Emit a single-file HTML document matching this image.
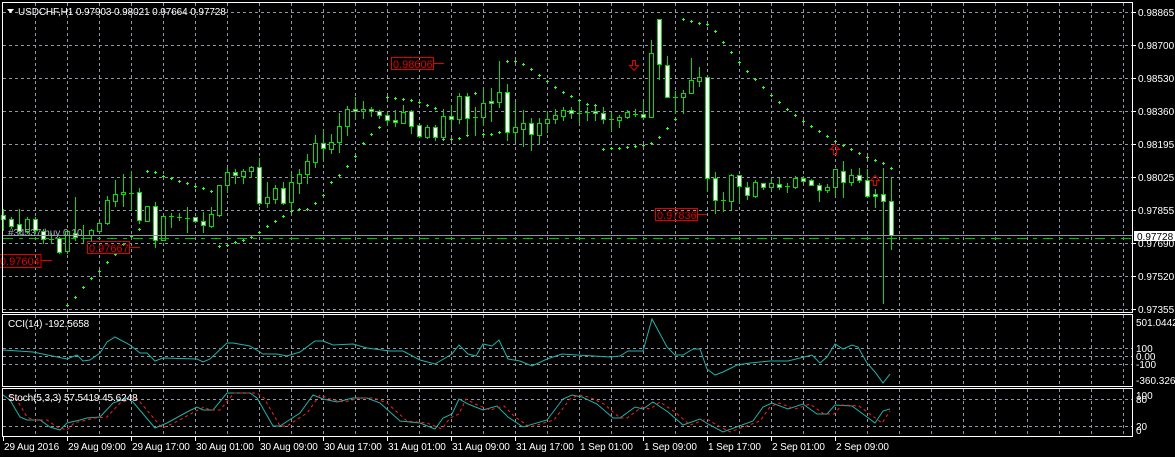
<!DOCTYPE html>
<html><head><meta charset="utf-8"><style>
html,body{margin:0;padding:0;background:#000;width:1175px;height:457px;overflow:hidden}
svg{display:block}
text{font-family:"Liberation Sans",sans-serif;font-size:10px;fill:#fff}
.t{font-size:10px;letter-spacing:-0.1px}
.r{font-size:11px;fill:#e00000}
</style></head><body>
<svg id="s" width="1175" height="457" xmlns="http://www.w3.org/2000/svg">
<rect width="1175" height="457" fill="#000"/>
<g id="grid" stroke="#8e98a4" stroke-width="1" stroke-dasharray="3,3"></g>
<g id="cand"></g>
<g id="sar" stroke="#22ff22" stroke-width="1"></g>
<line x1="3" y1="235.5" x2="1132" y2="235.5" stroke="#8a94a0"/>
<line x1="3" y1="238.5" x2="1132" y2="238.5" stroke="#00c000" stroke-dasharray="10,6,4,6"/>
<text x="8" y="236" style="fill:#a8b0c0">#34537 buy 0.10</text>
<g fill="none" stroke="#e00000">
<rect x="-2" y="254.5" width="43" height="13"/><line x1="41" y1="260.5" x2="52" y2="260.5"/>
<rect x="87.5" y="241.5" width="42" height="12"/><line x1="130" y1="247.5" x2="140" y2="247.5"/>
<rect x="391.5" y="57.5" width="42" height="12"/><line x1="434" y1="63.5" x2="444" y2="63.5"/>
<rect x="655.5" y="208.5" width="42" height="12"/><line x1="698" y1="214.5" x2="707" y2="214.5"/>
<path d="M632.5 60.5h3v5h3l-4.5 5-4.5-5h3z"/>
<path d="M833.5 154.5h3v-5h3l-4.5-5-4.5 5h3z"/>
<path d="M873.5 185.5h3v-5h3l-4.5-5-4.5 5h3z"/>
</g>
<text x="0" y="265" class="r">0.97604</text>
<text x="89" y="252" class="r">0.97667</text>
<text x="393" y="68" class="r">0.98606</text>
<text x="657" y="219" class="r">0.97836</text>
<polyline id="cci" fill="none" stroke="#20b2aa" stroke-width="1"/>
<polyline id="stm" fill="none" stroke="#20b2aa" stroke-width="1"/>
<polyline id="sts" fill="none" stroke="#ff2020" stroke-width="1" stroke-dasharray="3,3"/>
<g fill="none" stroke="#fff" stroke-width="1">
<rect x="2.5" y="2.5" width="1130" height="310"/>
<rect x="2.5" y="314.5" width="1130" height="72"/>
<rect x="2.5" y="388.5" width="1130" height="48"/>
</g>
<path d="M7 9h7l-3.5 4z" fill="#fff"/>
<text x="18" y="15" class="t">USDCHF,H1  0.97903 0.98021 0.97664 0.97728</text>
<text x="8" y="327" class="t">CCI(14) -192.5658</text>
<text x="8" y="401" class="t">Stoch(5,3,3) 57.5419 45.6248</text>
<g id="ax"></g>
<rect x="1134" y="231" width="41" height="10" fill="#fff"/>
<text x="1137" y="240" style="fill:#000">0.97728</text>
</svg>
<script>
var NS="http://www.w3.org/2000/svg";
function el(p,t,a,txt){var e=document.createElementNS(NS,t);for(var k in a)e.setAttribute(k,a[k]);if(txt!=null)e.textContent=txt;document.getElementById(p).appendChild(e);return e;}
for(var x=35;x<1132;x+=32){[[3,312],[315,386],[389,436]].forEach(function(r){el("grid","line",{x1:x+.5,y1:r[0],x2:x+.5,y2:r[1]});});}
var hy=[12,45,78,111,144,177,210,243,276,309];
hy.forEach(function(y){el("grid","line",{x1:3,y1:y+.5,x2:1132,y2:y+.5});});
[348,356,364,399,426].forEach(function(y){el("grid","line",{x1:3,y1:y+.5,x2:1132,y2:y+.5});});
var pl=["0.98865","0.98700","0.98530","0.98360","0.98195","0.98025","0.97855","0.97690","0.97520","0.97355"];
pl.forEach(function(t,i){el("ax","line",{x1:1132,y1:hy[i]+.5,x2:1136,y2:hy[i]+.5,stroke:"#fff"});el("ax","text",{x:1138,y:hy[i]+4},t);});
[["501.0442",326],["100",352],["0.00",360],["-100",368],["-360.3264",384],["100",399],["80",403],["20",430],["0",434]].forEach(function(a){el("ax","text",{x:1136,y:a[1]},a[0]);});
var tl=["29 Aug 2016","29 Aug 09:00","29 Aug 17:00","30 Aug 01:00","30 Aug 09:00","30 Aug 17:00","31 Aug 01:00","31 Aug 09:00","31 Aug 17:00","1 Sep 01:00","1 Sep 09:00","1 Sep 17:00","2 Sep 01:00","2 Sep 09:00"];
tl.forEach(function(t,i){var x=3+64*i;el("ax","line",{x1:x+.5,y1:437,x2:x+.5,y2:441,stroke:"#fff"});el("ax","text",{x:x+1,y:450,"class":"t"},t);});
var C=[["b",215,219,209,230],["b",219,226,217,228],["b",224,231,209,233],["u",219,231,217,233],["b",219,230,217,233],["b",231,239,229,243],["b",239,239,233,243],["b",238,252,237,253],["u",231,251,230,253],["b",233,237,197,240],
["b",235,235,225,243],["u",230,235,229,240],["u",223,231,222,232],["u",200,223,196,224],["u",194,201,180,206],["u",192,194,174,206],["b",193,193,171,209],["b",192,220,188,223],["u",206,221,206,221],["b",206,240,202,247],
["u",216,240,216,240],["b",216,216,213,227],["b",217,217,213,220],["b",218,218,207,232],["b",217,221,217,222],["b",221,225,212,232],["u",214,226,207,227],["u",185,215,185,216],["u",172,185,168,192],["b",172,175,169,183],
["u",171,176,169,183],["u",167,171,166,177],["b",167,203,158,205],["u",197,203,182,207],["u",188,199,185,203],["b",188,203,182,204],["u",182,202,173,210],["u",174,183,169,193],["u",161,174,154,183],["u",143,162,135,167],
["b",143,148,130,160],["u",142,149,134,153],["u",126,142,113,152],["u",109,126,106,135],["b",109,111,97,118],["u",109,111,101,118],["b",109,111,107,116],["b",111,115,110,118],["b",115,120,112,125],["b",120,122,110,126],
["u",112,123,105,123],["b",111,126,110,133],["b",125,136,125,137],["u",127,137,125,138],["b",127,137,125,140],["u",116,137,109,140],["b",116,119,105,128],["u",96,119,93,123],["b",96,118,93,133],["b",117,117,107,135],
["u",103,117,89,125],["b",101,103,88,121],["u",92,102,61,107],["b",92,132,84,140],["u",127,132,102,140],["u",123,129,110,146],["b",123,134,118,150],["u",123,135,118,143],["u",119,123,111,132],["u",115,119,109,123],
["u",110,116,107,120],["b",110,113,107,118],["b",113,113,99,123],["b",112,112,107,120],["b",111,113,105,120],["b",113,119,107,123],["b",119,119,112,130],["u",117,120,115,127],["u",112,117,110,118],["b",114,114,109,116],
["b",114,117,102,119],["u",53,117,40,117],["b",19,64,19,79],["b",65,97,56,97],["b",97,97,91,113],["u",93,97,90,113],["u",80,93,58,93],["u",77,81,67,86],["b",77,178,77,191],["b",178,200,172,213],
["b",200,200,192,211],["u",175,201,174,209],["b",175,186,175,203],["b",187,195,182,199],["u",182,196,180,197],["b",183,187,183,189],["u",183,187,178,190],["b",184,187,178,189],["b",186,186,183,192],["u",178,187,176,188],
["b",178,181,176,182],["b",180,185,179,185],["b",185,190,183,201],["u",187,190,184,192],["u",169,187,169,195],["b",171,182,161,197],["u",175,182,169,185],["b",175,180,168,182],["b",180,196,169,197],["b",194,196,189,207],
["b",194,201,168,303],["b",201,235,178,249]];
C.forEach(function(c,k){var x=3+8*k;
el("cand","line",{x1:x+.5,y1:c[3],x2:x+.5,y2:c[4]+1,stroke:"#00e000"});
if(c[2]-c[1]<1){el("cand","line",{x1:x-2,y1:c[1]+.5,x2:x+3,y2:c[1]+.5,stroke:"#00e000"});}
else el("cand","rect",{x:x-1.5,y:c[1]+.5,width:4,height:c[2]-c[1],fill:c[0]=="b"?"#fff":"#000",stroke:"#00e000"});
});
var S={8:305,9:297,10:287,11:278,12:271,13:262,14:254,15:244,16:236,17:229,18:171,19:172,20:176,21:178,22:181,23:183,24:186,25:188,26:191,27:246,28:245,29:242,30:240,31:237,32:232,33:226,34:221,35:216,36:211,37:209,38:209,39:203,40:195,41:182,42:175,43:166,44:156,45:143,46:134,47:127,48:97,49:98,50:99,51:100,52:102,53:105,54:108,55:139,56:139,57:138,58:135,59:93,60:134,61:134,62:132,63:61,64:61,65:64,66:69,67:75,68:81,69:87,70:92,71:96,72:100,73:104,74:105,75:149,76:148,77:148,78:147,79:146,80:145,81:143,82:137,83:128,84:119,85:19,86:21,87:23,88:24,89:31,90:42,91:52,92:62,93:71,94:79,95:87,96:95,97:102,98:109,99:115,100:121,101:126,102:131,103:136,104:141,105:145,106:149,107:153,108:157,109:160,110:163,111:168};
for(var k in S){var x=3+8*k,y=S[k];el("sar","path",{d:"M"+(x-1)+" "+(y+.5)+"h3M"+(x+.5)+" "+(y-1)+"v3"});}
document.getElementById("cci").setAttribute("points","3,350 33,352 67,359 77,355 83,361 90,360 100,353 107,342 115,337 130,345 140,353 147,353 155,361 163,358 197,359 203,362 210,359 227,343 233,343 250,346 263,354 277,354 287,356 300,352 315,341 323,341 333,345 353,344 367,348 390,351 403,351 420,360 435,364 452,354 459,345 468,354 476,356 483,344 492,346 499,340 508,359 520,361 532,366 547,359 562,354 577,355 610,357 620,356 628,351 643,351 652,319 667,347 675,355 683,355 693,349 700,349 707,369 715,375 723,372 737,365 750,363 770,361 788,361 812,355 820,363 827,357 835,344 843,349 852,345 858,347 867,363 875,372 883,383 890,374");
var st=[[3,395],[10,400],[20,417],[27,420],[40,420],[50,427],[60,430],[67,423],[80,420],[87,418],[100,417],[113,403],[127,398],[133,402],[155,428],[167,423],[187,412],[197,407],[203,410],[213,410],[227,393],[250,393],[257,398],[273,426],[280,426],[300,413],[313,395],[323,399],[337,402],[353,398],[367,398],[380,403],[390,412],[400,421],[420,423],[435,429],[443,418],[452,414],[459,399],[468,404],[483,410],[497,406],[508,417],[523,427],[547,420],[563,399],[572,395],[582,397],[597,404],[613,418],[620,418],[635,407],[643,409],[653,402],[668,412],[683,425],[700,419],[708,424],[723,432],[753,421],[763,407],[772,403],[788,409],[803,404],[817,414],[827,414],[835,405],[852,406],[867,417],[875,423],[883,411],[890,409]];
document.getElementById("stm").setAttribute("points",st.map(function(p){return p.join(",")}).join(" "));
var sg=[];for(var i=0;i<st.length;i++){var b=st[i];sg.push([Math.min(b[0]+7,890),b[1]]);}
sg[sg.length-1]=[890,411];
document.getElementById("sts").setAttribute("points",sg.map(function(p){return p.join(",")}).join(" "));
</script>
</body></html>
